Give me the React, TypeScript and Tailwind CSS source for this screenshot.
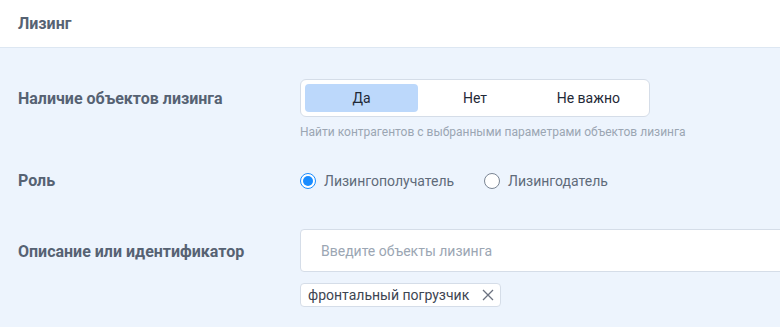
import React, { useState } from 'react';

export default function App() {
  const [presence, setPresence] = useState('yes');
  const [role, setRole] = useState('lessee');

  const options = [
    { id: 'yes', label: 'Да' },
    { id: 'no', label: 'Нет' },
    { id: 'any', label: 'Не важно' },
  ];

  return (
    <div className="w-[780px] h-[327px] overflow-hidden bg-[#edf4fd] font-['Roboto',sans-serif]">
      {/* Header */}
      <div className="h-[48px] bg-white border-b border-[#dde7f2] flex items-center px-[18px]">
        <span className="text-[16px] font-bold text-[#566273]">Лизинг</span>
      </div>

      <div className="pt-[31px]">
        {/* Presence */}
        <div className="flex">
          <div className="w-[300px] shrink-0 pl-[18px] pt-[8px] text-[16px] font-bold text-[#566273]">
            Наличие объектов лизинга
          </div>
          <div>
            <div className="w-[350px] h-[38px] bg-white border border-[#d5dde8] rounded-[6px] flex items-center px-[4px]">
              {options.map((o) => (
                <button
                  key={o.id}
                  onClick={() => setPresence(o.id)}
                  className={`flex-1 h-[28px] rounded-[4px] text-[14px] text-[#1f2937] ${
                    presence === o.id ? 'bg-[#bcd8fb]' : ''
                  }`}
                >
                  {o.label}
                </button>
              ))}
            </div>
            <div className="mt-[6px] text-[12px] text-[#9ba6b3]">
              Найти контрагентов с выбранными параметрами объектов лизинга
            </div>
          </div>
        </div>

        {/* Role */}
        <div className="flex mt-[28px] h-[24px] items-center">
          <div className="w-[300px] shrink-0 pl-[18px] text-[16px] font-bold text-[#566273]">Роль</div>
          <div className="flex items-center gap-[30px] text-[14px] text-[#5f6b7a]">
            <label className="flex items-center gap-[8px] cursor-pointer" onClick={() => setRole('lessee')}>
              <span
                className={`w-[16px] h-[16px] rounded-full border flex items-center justify-center bg-white ${
                  role === 'lessee' ? 'border-[#1a8cff]' : 'border-[#7a8594]'
                }`}
              >
                {role === 'lessee' && <span className="w-[10px] h-[10px] rounded-full bg-[#1a8cff]" />}
              </span>
              Лизингополучатель
            </label>
            <label className="flex items-center gap-[8px] cursor-pointer" onClick={() => setRole('lessor')}>
              <span
                className={`w-[16px] h-[16px] rounded-full border flex items-center justify-center bg-white ${
                  role === 'lessor' ? 'border-[#1a8cff]' : 'border-[#7a8594]'
                }`}
              >
                {role === 'lessor' && <span className="w-[10px] h-[10px] rounded-full bg-[#1a8cff]" />}
              </span>
              Лизингодатель
            </label>
          </div>
        </div>

        {/* Description */}
        <div className="flex mt-[36px]">
          <div className="w-[300px] shrink-0 pl-[18px] pt-[11px] text-[16px] font-bold text-[#566273]">
            Описание или идентификатор
          </div>
          <div className="flex-1">
            <input
              placeholder="Введите объекты лизинга"
              className="w-[520px] h-[43px] bg-white border border-[#d5dde8] rounded-[4px] px-[20px] text-[14px] text-[#1f2937] placeholder:text-[#9ba6b3] outline-none"
            />
            <div className="mt-[11px] inline-flex items-center h-[24px] bg-white border border-[#d5dde8] rounded-[4px] pl-[7px] pr-[5px] text-[14px] text-[#3d4552]">
              фронтальный погрузчик
              <svg className="ml-[12px]" width="14" height="14" viewBox="0 0 14 14" fill="none" stroke="#6b7280" strokeWidth="1.3">
                <path d="M2 2L12 12M12 2L2 12" />
              </svg>
            </div>
          </div>
        </div>
      </div>
    </div>
  );
}
